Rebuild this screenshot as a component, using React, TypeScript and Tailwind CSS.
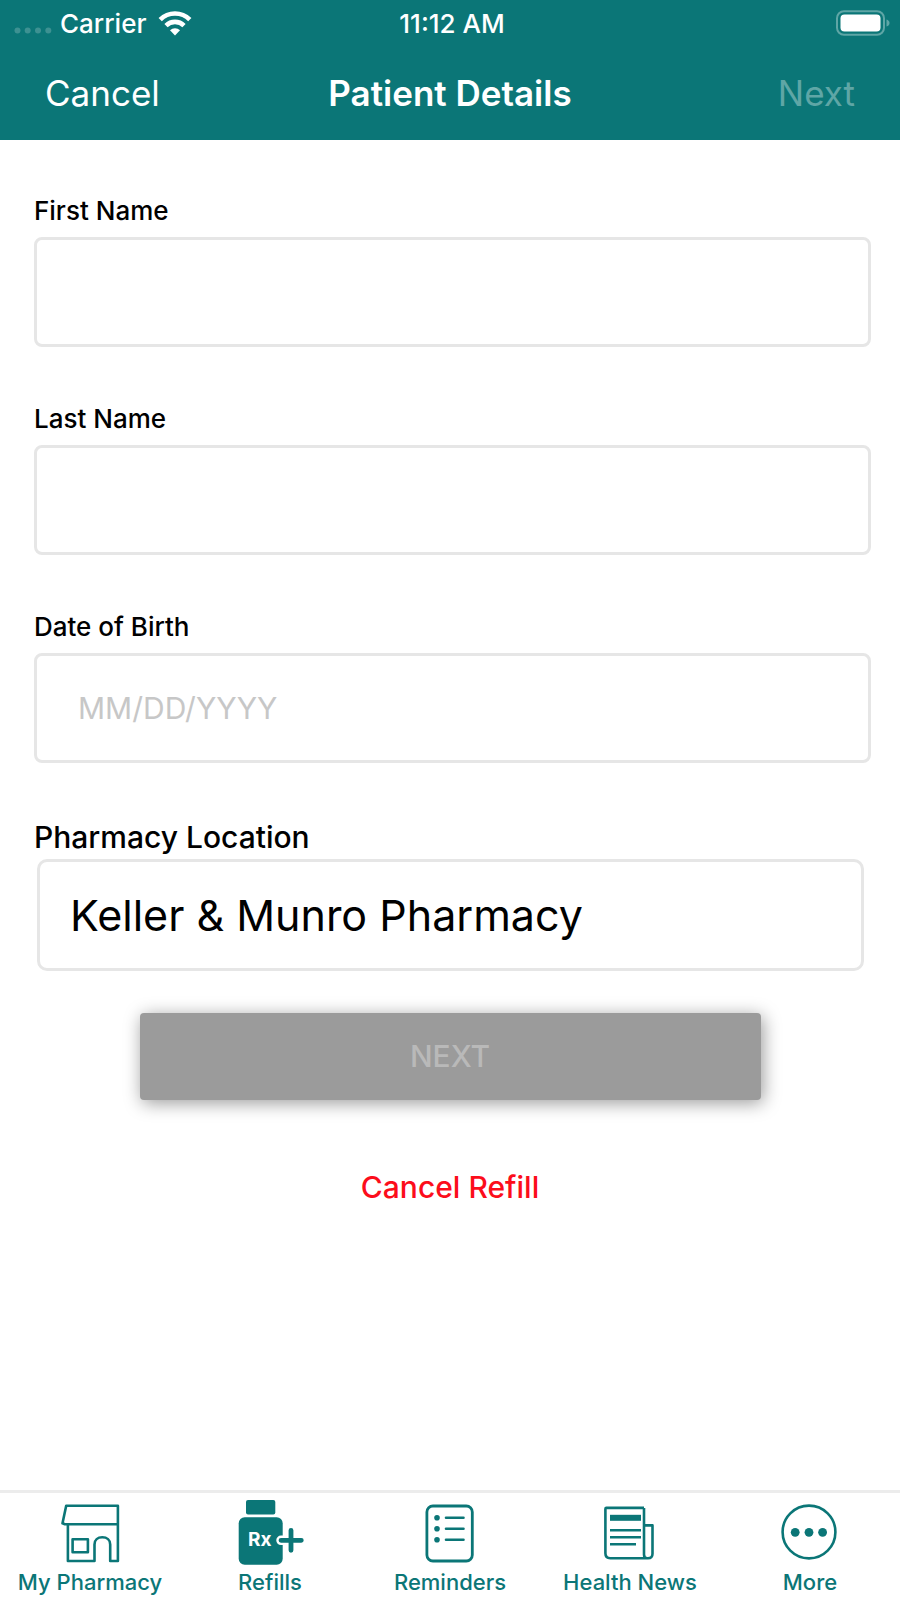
import { useState } from "react";
import type { ReactNode } from "react";

const FIELD =
  "h-[110px] w-full rounded-lg border-[3px] border-[#e6e6e6] bg-white px-[41px] text-[30px] text-black placeholder:text-[#c7c7c7] focus:outline-none";

function StoreIcon() {
  return (
    <svg viewBox="0 0 72 70" className="h-[70px] w-[72px]" fill="none" stroke="currentColor" strokeWidth="2.6" strokeLinejoin="round" strokeLinecap="round" aria-hidden>
      <path d="M13.9 26.3V63h26.6V46.5c0-4.6 3.2-7.2 7.8-7.2s7.9 2.6 7.9 7.2V63h7.7V7.7H12.2L8.5 25.3l2.4 1h53" />
      <rect x="18.6" y="41.3" width="15.3" height="13" />
    </svg>
  );
}

function BottleIcon() {
  return (
    <svg viewBox="0 0 72 70" className="h-[70px] w-[72px]" aria-hidden>
      <rect x="12" y="2" width="29.3" height="14.4" rx="2" fill="currentColor" />
      <rect x="4.7" y="19.3" width="44" height="47.4" rx="6" fill="currentColor" />
      <text x="14" y="48" fontFamily="Inter, sans-serif" fontSize="19" fontWeight="700" fill="#fff">
        Rx
      </text>
      <path d="M47 42.3h20M57 32.3v20" stroke="#fff" strokeWidth="9.5" strokeLinecap="round" />
      <path d="M47 42.3h20.3M57 32.3v20" stroke="currentColor" strokeWidth="4.8" strokeLinecap="round" />
    </svg>
  );
}

function ListIcon() {
  return (
    <svg viewBox="0 0 72 70" className="h-[70px] w-[72px]" fill="none" stroke="currentColor" strokeWidth="2.8" strokeLinecap="round" aria-hidden>
      <rect x="12.9" y="8" width="45.4" height="55" rx="6" />
      <path d="M32 19.7h17.5M32 30.7h17.5M32 41.7h17.5" strokeWidth="2.6" />
      <g fill="currentColor" stroke="none">
        <circle cx="23" cy="19.7" r="2.8" />
        <circle cx="23" cy="30.7" r="2.8" />
        <circle cx="23" cy="41.7" r="2.8" />
      </g>
    </svg>
  );
}

function NewsIcon() {
  return (
    <svg viewBox="0 0 72 70" className="h-[70px] w-[72px]" fill="none" stroke="currentColor" strokeWidth="2.6" strokeLinejoin="round" aria-hidden>
      <path d="M50 9.9H12.4q-1 0-1 1v44.4q0 4.9 4.9 4.9h37.7q4.5 0 4.5-4.5V27.4H50M50 9.9v46.5q0 3.8 3.4 3.8" />
      <path d="M16 19.8h31" strokeWidth="6" />
      <path d="M16 32.2h31M16 39.2h31M16 46.2h26" />
    </svg>
  );
}

function MoreIcon() {
  return (
    <svg viewBox="0 0 72 70" className="h-[70px] w-[72px]" aria-hidden>
      <circle cx="35" cy="34" r="26.4" fill="none" stroke="currentColor" strokeWidth="2.6" />
      <circle cx="21.2" cy="34.3" r="4.4" fill="currentColor" />
      <circle cx="35" cy="34.3" r="4.4" fill="currentColor" />
      <circle cx="48.6" cy="34.3" r="4.4" fill="currentColor" />
    </svg>
  );
}

const TABS: { label: string; icon: ReactNode }[] = [
  { label: "My Pharmacy", icon: <StoreIcon /> },
  { label: "Refills", icon: <BottleIcon /> },
  { label: "Reminders", icon: <ListIcon /> },
  { label: "Health News", icon: <NewsIcon /> },
  { label: "More", icon: <MoreIcon /> },
];

function StatusBar() {
  return (
    <div className="grid h-[46px] grid-cols-[1fr_auto_1fr] items-center pr-[10px] pl-[14px] text-[26px] font-medium">
      <div className="flex items-center">
        <svg viewBox="0 0 38 24" className="h-6 w-[38px]" fill="#3d9192" aria-hidden>
          <circle cx="3.5" cy="19.5" r="3" />
          <circle cx="13.7" cy="19.5" r="3" />
          <circle cx="24" cy="19.5" r="3" />
          <circle cx="34.3" cy="19.5" r="3" />
        </svg>
        <span className="ml-2">Carrier</span>
        <svg viewBox="0 0 34 26" className="ml-3 h-[26px] w-[34px]" fill="none" stroke="#fff" strokeWidth="4.6" aria-hidden>
          <path d="M2.2 9.6a21 21 0 0 1 29.6 0" />
          <path d="M8 15.6a12.8 12.8 0 0 1 18 0" />
          <path d="M17 25.4l-5-5.2a7.2 7.2 0 0 1 10 0z" fill="#fff" stroke="none" />
        </svg>
      </div>
      <span className="text-center">11:12 AM</span>
      <svg viewBox="0 0 54 26" className="h-[26px] w-[54px] justify-self-end" aria-hidden>
        <rect x="1" y="1.2" width="47" height="23.6" rx="7" fill="none" stroke="#5fa6a6" strokeWidth="2" />
        <rect x="4.5" y="4.6" width="40" height="16.8" rx="4" fill="#fff" />
        <path d="M50.5 9.5q3 1 3 3.5t-3 3.5z" fill="#5fa6a6" />
      </svg>
    </div>
  );
}

export default function App() {
  const [firstName, setFirstName] = useState("");
  const [lastName, setLastName] = useState("");
  const [birthDate, setBirthDate] = useState("");
  const ready = Boolean(firstName && lastName && birthDate);

  return (
    <div className="flex min-h-screen flex-col bg-white font-['Inter',sans-serif] text-black">
      <header className="bg-[#0b7677] text-white">
        <StatusBar />
        <div className="grid h-[94px] grid-cols-[1fr_auto_1fr] items-center px-[45px]">
          <button type="button" className="justify-self-start text-[35px] leading-[44px]">
            Cancel
          </button>
          <h1 className="text-[35px] leading-[44px] font-semibold">Patient Details</h1>
          <button type="button" disabled={!ready} className="justify-self-end text-[35px] leading-[44px] disabled:text-[#5fa6a6]">
            Next
          </button>
        </div>
      </header>

      <form className="flex flex-col pt-[55px] pr-[29px] pl-[34px]" onSubmit={(e) => e.preventDefault()}>
        <div className="flex flex-col gap-14">
          <div className="flex flex-col gap-[10px]">
            <label htmlFor="first-name" className="text-[26px] leading-8 font-medium">
              First Name
            </label>
            <input id="first-name" className={FIELD} value={firstName} onChange={(e) => setFirstName(e.target.value)} />
          </div>
          <div className="flex flex-col gap-[10px]">
            <label htmlFor="last-name" className="text-[26px] leading-8 font-medium">
              Last Name
            </label>
            <input id="last-name" className={FIELD} value={lastName} onChange={(e) => setLastName(e.target.value)} />
          </div>
          <div className="flex flex-col gap-[10px]">
            <label htmlFor="birth-date" className="text-[26px] leading-8 font-medium">
              Date of Birth
            </label>
            <input
              id="birth-date"
              className={FIELD}
              placeholder="MM/DD/YYYY"
              value={birthDate}
              onChange={(e) => setBirthDate(e.target.value)}
            />
          </div>
          <div className="flex flex-col gap-1">
            <label htmlFor="location" className="text-[30px] leading-9 font-medium">
              Pharmacy Location
            </label>
            <div className="pr-[7px] pl-[3px]">
              <select
                id="location"
                className="block h-[112px] w-full appearance-none rounded-[10px] border-[3px] border-[#e6e6e6] bg-white px-[30px] text-[43px] focus:outline-none"
              >
                <option>Keller &amp; Munro Pharmacy</option>
              </select>
            </div>
          </div>
        </div>
      </form>

      <div className="flex flex-col items-center">
        <button
          type="button"
          disabled={!ready}
          className="mt-[42px] h-[87px] w-[69%] rounded bg-[#9b9b9b] text-[30px] font-medium text-white shadow-[2px_3px_18px_rgba(0,0,0,0.4)] disabled:text-[#b9b9b9]"
        >
          NEXT
        </button>
        <button type="button" className="mt-[67px] text-[30px] leading-10 font-medium text-[#fc0d1b]">
          Cancel Refill
        </button>
      </div>

      <nav className="mt-auto grid grid-cols-5 border-t-[3px] border-[#ececec] pt-[5px] pb-[2px] text-[#0b7677]">
        {TABS.map((tab) => (
          <button key={tab.label} type="button" className="flex flex-col items-center">
            {tab.icon}
            <span className="text-[22px] leading-7 font-medium whitespace-nowrap">{tab.label}</span>
          </button>
        ))}
      </nav>
    </div>
  );
}
